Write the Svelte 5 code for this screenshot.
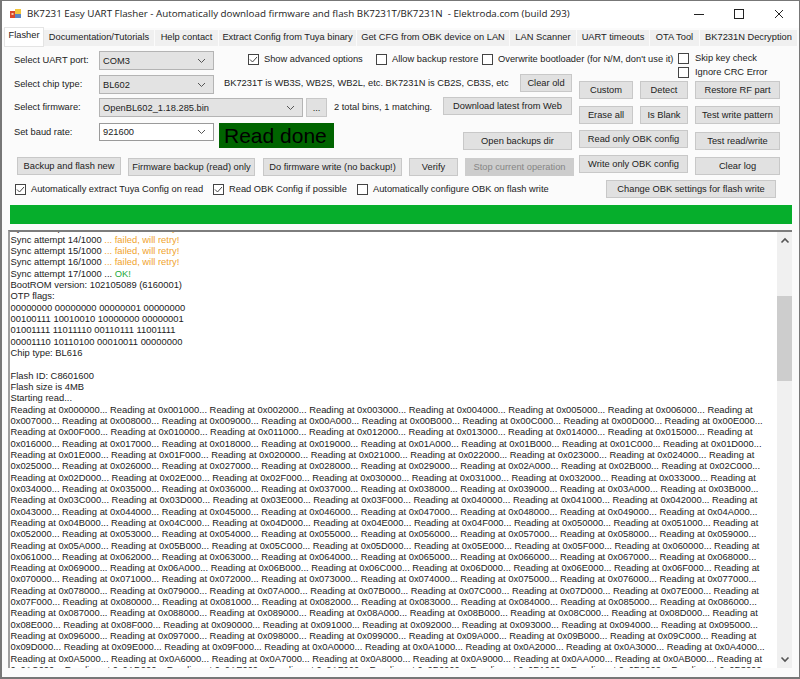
<script>
  const tabs = ['Flasher','Documentation/Tutorials','Help contact','Extract Config from Tuya binary','Get CFG from OBK device on LAN','LAN Scanner','UART timeouts','OTA Tool','BK7231N Decryption'];
  const hex = (n) => '0x' + (n * 0x1000).toString(16).toUpperCase().padStart(6, '0');
  const plain = [
    'BootROM version: 102105089 (6160001)','OTP flags:',
    '00000000 00000000 00000001 00000000','00100111 10010010 10000000 00000001',
    '01001111 11011110 00110111 11001111','00001110 10110100 00010011 00000000',
    'Chip type: BL616','\u00a0','Flash ID: C8601600','Flash size is 4MB','Starting read...'
  ];
  const reading = [];
  let a = 0;
  for (let i = 0; i < 24; i++) {
    const odd = i % 2 === 0;
    const n = odd ? 7 : 8;
    const parts = [];
    for (let k = 0; k < n; k++) parts.push((odd || k > 0 ? 'Reading at ' : '') + hex(a + k) + '...');
    reading.push(parts.join(' ') + (odd ? ' Reading at' : ''));
    a += n;
  }
</script>

<div class="window">
  <header class="title">
    <svg class="appicon" width="11" height="10" viewBox="0 0 11 10">
      <rect x="0" y="2" width="5" height="7" fill="#d9482b"/>
      <rect x="1.5" y="4" width="2" height="2" fill="#f6c7a8"/>
      <rect x="5" y="0" width="6" height="5" fill="#f2c63c"/>
      <rect x="5" y="5" width="6" height="4" fill="#5b86c4"/>
    </svg>
    <span class="titletext">BK7231 Easy UART Flasher - Automatically download firmware and flash BK7231T/BK7231N&nbsp; - Elektroda.com (build 293)</span>
    <div class="winbtns">
      <svg width="10" height="10" viewBox="0 0 10 10"><path d="M0 5.5h10" stroke="#222" fill="none"/></svg>
      <svg width="10" height="10" viewBox="0 0 10 10"><rect x=".5" y=".5" width="9" height="9" stroke="#222" fill="none"/></svg>
      <svg width="10" height="10" viewBox="0 0 10 10"><path d="M1 1l8 8M9 1l-8 8" stroke="#222" fill="none"/></svg>
    </div>
  </header>

  <nav class="tabs">
    {#each tabs as t, i}
      <div class="tab" class:active={i === 0}>{t}</div>
    {/each}
  </nav>

  <main class="top">
    <div class="row1">
      <span class="lab">Select UART port:</span>
      <div class="combo w115"><span>COM3</span>{@render chev()}</div>
      <label class="chk c1">{@render box(true)}Show advanced options</label>
      <label class="chk c2">{@render box(false)}Allow backup restore</label>
      <label class="chk c3">{@render box(false)}Overwrite bootloader (for N/M, don't use it)</label>
    </div>
    <div class="skips">
      <label class="chk small">{@render box(false)}Skip key check</label>
      <label class="chk small">{@render box(false)}Ignore CRC Error</label>
    </div>

    <div class="left">
      <div class="row r2">
        <span class="lab">Select chip type:</span>
        <div class="combo w115"><span>BL602</span>{@render chev()}</div>
        <span class="note chipnote">BK7231T is WB3S, WB2S, WB2L, etc. BK7231N is CB2S, CB3S, etc</span>
        <button class="clearold">Clear old</button>
      </div>
      <div class="row r3">
        <span class="lab">Select firmware:</span>
        <div class="combo w204"><span>OpenBL602_1.18.285.bin</span>{@render chev()}</div>
        <button class="dots">...</button>
        <span class="note bins">2 total bins, 1 matching.</span>
        <button class="download">Download latest from Web</button>
      </div>
      <div class="row r4">
        <span class="lab">Set baud rate:</span>
        <div class="combo w115 edit"><span>921600</span>{@render chev()}</div>
        <div class="status">Read done</div>
        <button class="backups">Open backups dir</button>
      </div>
      <div class="row r5">
        <button class="b1">Backup and flash new</button>
        <button class="b2">Firmware backup (read) only</button>
        <button class="b3">Do firmware write (no backup!)</button>
        <button class="b4">Verify</button>
        <button class="b5" disabled>Stop current operation</button>
      </div>
    </div>

    <div class="right">
      <button>Custom</button><button>Detect</button><button>Restore RF part</button>
      <button>Erase all</button><button>Is Blank</button><button>Test write pattern</button>
      <button class="span2">Read only OBK config</button><button class="low">Test read/write</button>
      <button class="span2">Write only OBK config</button><button class="low">Clear log</button>
    </div>
  </main>

  <div class="checks">
    <label class="chk k1">{@render box(true)}Automatically extract Tuya Config on read</label>
    <label class="chk k2">{@render box(true)}Read OBK Config if possible</label>
    <label class="chk k3">{@render box(false)}Automatically configure OBK on flash write</label>
    <button class="change">Change OBK settings for flash write</button>
  </div>

  <div class="progress"></div>

  <section class="log">
    <div class="lines">
      <div>Sync attempt 13/1000 <span class="warn">... failed, will retry!</span></div>
      {#each [14, 15, 16] as n}
        <div>Sync attempt {n}/1000 <span class="warn">... failed, will retry!</span></div>
      {/each}
      <div>Sync attempt 17/1000 ... <span class="ok">OK!</span></div>
      {#each plain as l}<div>{l}</div>{/each}
      {#each reading as l}<div>{l}</div>{/each}
    </div>
    <div class="scroll">
      <svg width="14" height="14" viewBox="0 0 14 14"><path d="M3.5 8.5L7 5l3.5 3.5" stroke="#555" stroke-width="1.6" fill="none"/></svg>
      <div class="track"><div class="thumb"></div></div>
      <svg width="14" height="14" viewBox="0 0 14 14"><path d="M3.5 5.5L7 9l3.5-3.5" stroke="#555" stroke-width="1.6" fill="none"/></svg>
    </div>
  </section>
</div>

{#snippet chev()}
  <svg class="chev" width="9" height="6" viewBox="0 0 9 6"><path d="M1 1l3.5 3.5L8 1" stroke="#555" fill="none"/></svg>
{/snippet}
{#snippet box(on)}
  <svg class="cb" width="11" height="11" viewBox="0 0 11 11">
    <rect x=".5" y=".5" width="10" height="10" fill="#fff" stroke="#444"/>
    {#if on}<path d="M2 5.5l2.5 2.5 4.5-5" stroke="#444" fill="none"/>{/if}
  </svg>
{/snippet}

<style>
  :global(body) { margin: 0; }
  .window {
    width: 800px; height: 679px; box-sizing: border-box; overflow: hidden;
    background: #fbfbfb; color: #222;
    border: 1px solid #777; border-left-width: 2px; border-bottom-width: 2px;
    font: 9.3px/12px "Liberation Sans", Arial, sans-serif;
  }
  .title { display: flex; align-items: center; box-sizing: border-box; height: 27px; background: #fff; padding: 0 0 2px 8px; }
  .appicon { flex: none; }
  .titletext { font: 9.8px/16px "Open Sans", sans-serif; margin-left: 6px; white-space: nowrap; color: #222; }
  .winbtns { margin-left: auto; display: flex; gap: 30px; padding-right: 15px; }

  .tabs { display: flex; height: 18px; padding-left: 3px; gap: 1px; align-items: flex-end; background: #fbfbfb; }
  .tab { background: #f0f0f0; height: 16px; line-height: 15px; text-align: center; white-space: nowrap; flex: none; }
  .tab:nth-child(1) { width: 38px; }
  .tab:nth-child(2) { width: 110px; }
  .tab:nth-child(3) { width: 63px; }
  .tab:nth-child(4) { width: 137px; }
  .tab:nth-child(5) { width: 152px; }
  .tab:nth-child(6) { width: 66px; }
  .tab:nth-child(7) { width: 72px; }
  .tab:nth-child(8) { width: 49px; }
  .tab:nth-child(9) { width: 97px; }
  .tab.active { background: #fff; height: 18px; box-shadow: 0 0 0 1px #e4e4e4; }

  .top {
    display: grid; grid-template-columns: 565px 99px 1fr; grid-template-rows: 24px auto;
    padding: 4px 0 0 12px;
  }
  .row1 { grid-column: 1 / 3; display: flex; align-items: flex-start; height: 24px; white-space: nowrap; }
  .skips { grid-column: 3; display: flex; flex-direction: column; gap: 2px; height: 24px; padding-top: 2px; }
  .left { grid-column: 1; grid-row: 2; display: flex; flex-direction: column; }
  .right {
    grid-column: 2 / 4; grid-row: 2; align-self: start; margin-top: 7px;
    display: grid; grid-template-columns: 54px 48px 85px; column-gap: 7px;
    grid-template-rows: 25px 24px 25px 18px; align-items: start;
  }
  .right button { height: 18px; }
  .right .span2 { grid-column: 1 / 3; }
  .right .low { margin-top: 2px; }

  .row { display: flex; align-items: flex-start; white-space: nowrap; }
  .r2 { height: 23px; }
  .r3 { height: 25px; }
  .r4 { height: 35px; }
  .r5 { height: 19px; }
  .lab { width: 85px; flex: none; padding-top: 4px; }

  .combo {
    box-sizing: border-box; height: 19px; display: flex; align-items: center; justify-content: space-between;
    padding: 0 7px 0 3px; background: #e3e3e3; border: 1px solid #b4b4b4; flex: none; margin-top: 1px;
  }
  .w115 { width: 115px; }
  .w204 { width: 204px; }
  .combo.edit { background: #fff; border-color: #9a9a9a; height: 18px; }

  button {
    box-sizing: border-box; height: 18px; padding: 0; margin: 0; flex: none;
    background: #e1e1e1; border: 1px solid #c8c8c8; color: #222;
    font: inherit; white-space: nowrap;
  }
  button:disabled { background: #cdcdcd; color: #858585; border-color: #cdcdcd; }

  .note { padding-top: 3px; }
  .chipnote { margin-left: 10px; width: 296px; flex: none; }
  .clearold { width: 52px; }
  .dots { width: 21px; height: 19px; margin: 1px 0 0 3px; }
  .bins { margin-left: 7px; width: 109px; flex: none; padding-top: 4px; }
  .download { width: 129px; }

  .status {
    width: 115px; height: 25px; margin: 1px 0 0 5px; flex: none; box-sizing: border-box; padding-left: 5px;
    background: #006400; color: #000; font-size: 21px; line-height: 26px;
  }
  .backups { width: 109px; margin: 10px 0 0 129px; }
  .b1 { width: 104px; margin-left: 3px; }
  .b2 { width: 127px; margin: 1px 0 0 7px; }
  .b3 { width: 139px; margin: 1px 0 0 8px; }
  .b4 { width: 49px; margin: 1px 0 0 7px; }
  .b5 { width: 109px; margin: 1px 0 0 7px; }

  .chk { display: flex; align-items: center; gap: 5px; white-space: nowrap; flex: none; }
  .cb { flex: none; }
  .small { gap: 6px; }
  .row1 .chk { margin-top: 3px; }
  .c1 { margin-left: 34px; width: 128px; }
  .c2 { width: 106px; }
  .c3 { flex: none; }

  .checks { display: flex; align-items: center; height: 18px; padding: 4px 0 0 13px; }
  .k1 { width: 198px; }
  .k2 { width: 144px; }
  .k3 { width: 249px; }
  .change { width: 170px; }

  .progress { height: 19px; margin: 7px 7px 0 8px; background: #06ae2c; }

  .log {
    box-sizing: border-box; height: 438px; margin: 6px 7px 0 6px; background: #fff;
    border-top: 2px solid #7d7d7d; border-left: 2px solid #a0a0a0;
    display: flex; overflow: hidden;
  }
  .lines { flex: 1; min-width: 0; padding-left: .5px; margin-top: -9.7px; font-size: 9.4px; line-height: 11.33px; white-space: nowrap; overflow: hidden; }
  .warn { color: #f0a32e; }
  .ok { color: #22a83c; }
  .scroll { width: 15px; flex: none; background: #f0f0f0; display: flex; flex-direction: column; align-items: center; height: 436px; }
  .scroll svg { flex: none; margin: 2px 0; }
  .track { flex: 1; width: 100%; padding-top: 46px; box-sizing: border-box; }
  .thumb { height: 85px; background: #cdcdcd; }
</style>
